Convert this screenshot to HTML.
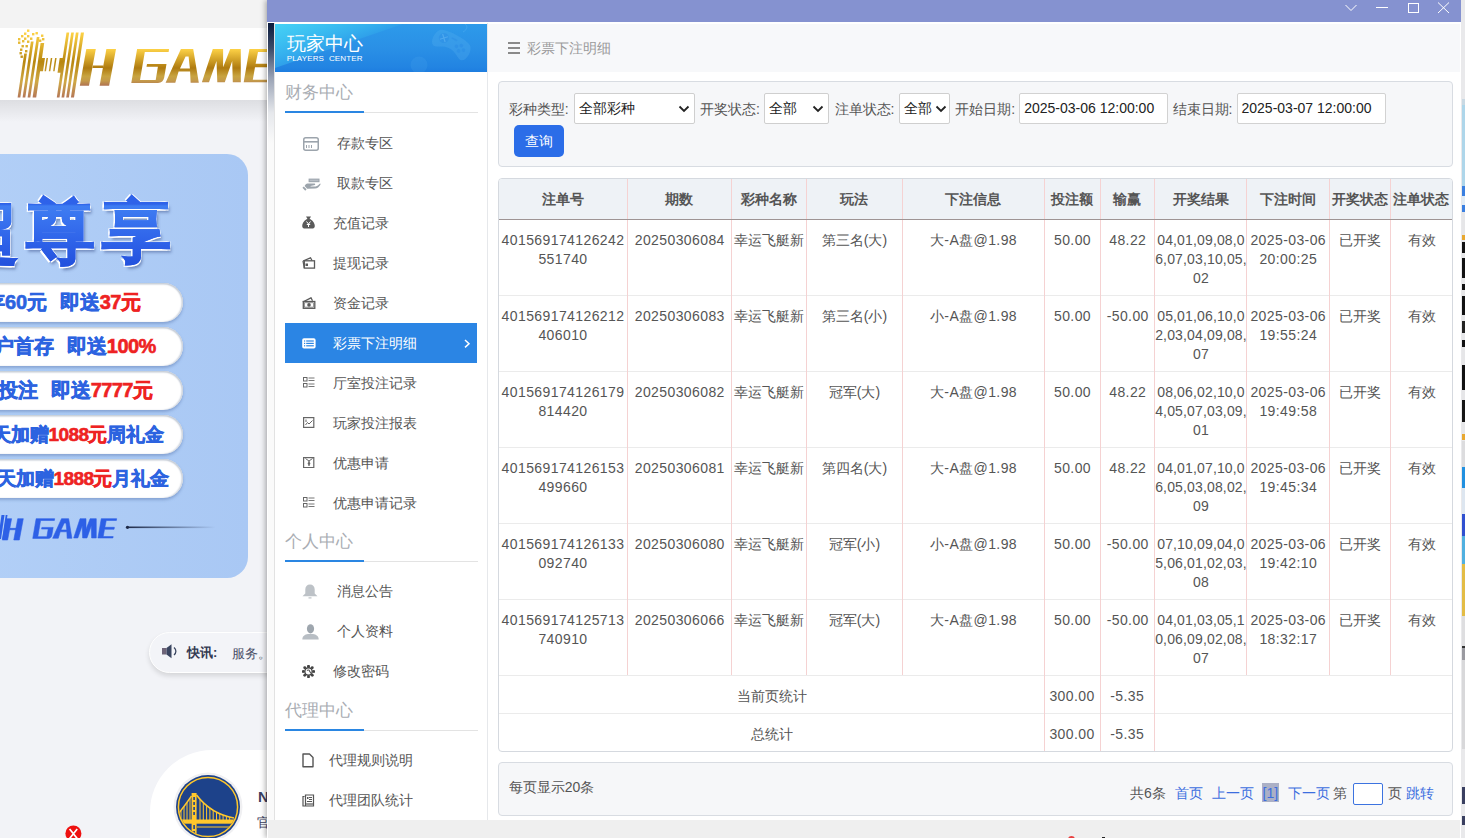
<!DOCTYPE html>
<html><head><meta charset="utf-8">
<style>
*{box-sizing:border-box}
html,body{margin:0;padding:0}
body{width:1465px;height:838px;overflow:hidden;position:relative;background:#F2F3F7;font-family:"Liberation Sans",sans-serif;color:#555}
.abs{position:absolute}
/* background page */
#topstrip{position:absolute;left:0;top:0;width:1465px;height:28px;background:#F3F3F3}
#hdrband{position:absolute;left:0;top:28px;width:1465px;height:72px;background:#fff}
#hdrshadow{position:absolute;left:0;top:100px;width:1465px;height:22px;background:linear-gradient(#DDDEE2,#F2F3F7)}
#banner{position:absolute;left:-60px;top:154px;width:308px;height:424px;border-radius:21px;background:linear-gradient(90deg,#B3D0F7,#A9C8F4);overflow:hidden}
.pill{position:absolute;left:0;width:243.4px;height:39px;border-radius:20px;background:#fff;box-shadow:inset 0 1.5px 1.5px #C5CCD6,inset -1.5px 0 1.5px #CFD5DE,0 2px 3px rgba(60,90,150,.35);font-weight:bold;font-size:20px;line-height:39px;color:#2C63E0;white-space:nowrap;overflow:hidden;-webkit-text-stroke:.6px currentColor;word-spacing:7px}
.pill b{color:#EE2222;-webkit-text-stroke:.6px #EE2222;letter-spacing:-.6px}
#notice{position:absolute;left:149px;top:631.5px;width:300px;height:41px;border-radius:21px;background:#F3F4F8;border:1.5px solid #fff;box-shadow:0 3px 5px rgba(0,0,0,.12)}
#card{position:absolute;left:149.5px;top:750px;width:400px;height:200px;border-radius:62px;background:#fff}
/* popup */
#popup{position:absolute;left:267px;top:0;width:1194px;height:838px;background:#fff;box-shadow:-2px 0 5px rgba(0,0,0,.28),2px 0 3px rgba(0,0,0,.2)}
#titlebar{position:absolute;left:0;top:0;width:1194px;height:22px;background:#8592D0}
#strip{position:absolute;left:1px;top:23px;width:7px;height:797px;background:linear-gradient(#0B1B3C 0px,#3B4A68 25px,#9AA3B5 55px,#E6E8EC 90px,#FAFAFA 120px,#FAFAFA);border-right:1px solid #E2E2E2}
#sidebar{position:absolute;left:8px;top:23px;width:213px;height:797px;background:#fff;border-right:1px solid #E6E8EB}
#sbhead{position:absolute;left:0;top:1px;width:212px;height:47.5px;background:linear-gradient(180deg,#2D9AEA,#2A90E6 50%,#2284E2 90%,#1E7DE0);overflow:hidden}
#main{position:absolute;left:221px;top:23px;width:972px;height:797px;background:#fff}
#topbar{position:absolute;left:0;top:1px;width:972px;height:48px;background:#F7F8FA}
#bottomgray{position:absolute;left:1px;top:820px;width:1192px;height:18px;background:#EFEFEF}
.sec{position:absolute;left:9.7px;font-size:17px;color:#A9ADB3;line-height:20px}
.secline{position:absolute;left:9.7px;width:193px;height:1px;background:#E3E3E3}
.secline i{position:absolute;left:0;top:-1px;width:79px;height:2.5px;background:#2A86E2}
.mi{position:absolute;left:0;width:212px;height:40px;font-size:14px;line-height:40px;color:#555;white-space:nowrap}
.mi .ic{position:absolute;top:0;}
.mi.act{left:10px;width:192px;background:#2B85E4;color:#fff}
.box{position:absolute;background:#F6F7F9;border:1px solid #D8DCE2;border-radius:4px}
.lbl{position:absolute;font-size:14px;color:#555;line-height:16px;white-space:nowrap}
.sel{position:absolute;height:31px;border:1px solid #CFCFCF;border-radius:2px;background:#fff;font-size:14px;color:#222;line-height:29px;padding-left:4px}
.sel svg{position:absolute;right:4px;top:11px}
.inp{position:absolute;height:31px;border:1px solid #D2D2D2;border-radius:2px;background:#fff;font-size:14px;color:#222;line-height:29px;padding-left:4px;font-family:"Liberation Sans",sans-serif}
.btn{position:absolute;background:#2B6DE8;border-radius:5px;color:#fff;font-size:14px;text-align:center;line-height:32px}
/* table */
.tbl{position:absolute;left:10px;top:155px;width:955px;height:574px;border:1px solid #D5D9DF;border-radius:4px;background:#fff;overflow:hidden}
.tbl>div{position:absolute}
.thbg{left:0;top:0;width:953px;height:40px;background:#EEF2F6}
.th{top:0;height:40px;line-height:40px;text-align:center;font-weight:bold;font-size:14px;color:#555;white-space:nowrap}
.thl{left:0;top:40px;width:953px;height:1px;background:#9E9494}
.td{text-align:center;font-size:14px;line-height:19px;padding-top:10.8px;color:#555;white-space:nowrap}
.td.n{letter-spacing:.4px}
.td.rs{letter-spacing:.15px}
.hl{left:0;width:953px;height:1px;background:#EBEBEB}
.vl{width:1px;background:#F5D2D2}
.pg{position:absolute;font-size:14px;line-height:16px;white-space:nowrap}
.lnk{color:#3C6EDF}
</style></head><body>
<div id="topstrip"></div>
<div id="hdrband"></div>
<div id="hdrshadow"></div>
<svg class="abs" style="left:0;top:0" width="270" height="100">
<defs>
<linearGradient id="gb" gradientUnits="userSpaceOnUse" x1="0" y1="32" x2="0" y2="98"><stop offset="0" stop-color="#FFD447"/><stop offset="0.45" stop-color="#B8870F"/><stop offset="0.75" stop-color="#CFA845"/><stop offset="1" stop-color="#B47658"/></linearGradient>
<linearGradient id="gs" gradientUnits="userSpaceOnUse" x1="0" y1="48.5" x2="0" y2="86"><stop offset="0" stop-color="#FFD447"/><stop offset="0.52" stop-color="#AF7B10"/><stop offset="0.74" stop-color="#C8A440"/><stop offset="0.86" stop-color="#C49A4A"/><stop offset="1" stop-color="#AE7052"/></linearGradient>
</defs>
<g fill="url(#gb)">
<polygon points="17.6,97.6 20.3,97.6 26.9,53.5 24.2,53.5"/>
<polygon points="22.6,97.6 25.3,97.6 33.6,41.5 30.9,41.5"/>
<polygon points="27.6,97.6 30.3,97.6 39.5,37 36.8,37"/>
<polygon points="32.6,97.6 36.2,97.6 44.2,43 40.6,43"/>
<polygon points="56.8,97.6 59.5,97.6 69.2,32.6 66.5,32.6"/>
<polygon points="61.5,97.6 64.2,97.6 73.9,32.6 71.2,32.6"/>
<polygon points="66.2,97.6 68.9,97.6 78.6,32.6 75.9,32.6"/>
<polygon points="70.9,97.6 74,97.6 84,32.6 80.9,32.6"/>
<polygon points="38.6,71.3 43,71.3 45,58 40.6,58"/>
<polygon points="44.5,71.3 46,71.3 48,58 46.5,58"/>
<polygon points="48.8,71.3 50.3,71.3 52.3,58 50.8,58"/>
<polygon points="53.1,71.3 54.6,71.3 56.6,58 55.1,58"/>
<polygon points="57.5,72.7 62.2,72.7 64.4,58 59.7,58"/>
<rect x="27" y="29.5" width="2.4" height="2.4"/><rect x="24" y="32.5" width="2.4" height="2.4"/><rect x="21" y="35" width="2.4" height="2.4"/><rect x="27" y="35" width="2.4" height="2.4"/><rect x="32" y="33" width="2.4" height="2.4"/><rect x="35.5" y="32" width="2.4" height="2.4"/><rect x="18" y="38" width="2.4" height="2.4"/><rect x="24" y="37.5" width="2.4" height="2.4"/><rect x="30" y="37.5" width="2.4" height="2.4"/><rect x="41" y="34.5" width="2.4" height="2.4"/><rect x="42" y="38" width="2.4" height="2.4"/><rect x="18" y="41.5" width="2.4" height="2.4"/><rect x="22" y="40" width="2.4" height="2.4"/><rect x="27" y="40.5" width="2.4" height="2.4"/><rect x="21.5" y="45" width="2.4" height="2.4"/><rect x="25.5" y="45" width="2.4" height="2.4"/><rect x="20" y="48.5" width="2.4" height="2.4"/><rect x="19.5" y="52" width="2.4" height="2.4"/><rect x="25" y="50" width="2.4" height="2.4"/><rect x="20.5" y="55.5" width="2.4" height="2.4"/><rect x="39" y="39.5" width="2.4" height="2.4"/>
</g>
<g fill="url(#gs)">
<polygon points="86.3,48.9 95.8,48.9 89,85.7 79.8,85.7"/>
<polygon points="106.4,48.9 116,48.9 109.1,85.7 99.6,85.7"/>
<polygon points="92.8,65.6 103.4,65.6 103,68 92.4,68"/>
<path d="M137.1,48.9 L169.1,48.9 L168.6,52 L144.8,52 L140,79.9 L155.7,79.9 L157.9,66.8 L146.5,66.8 L147,64 L166.5,64 L164.2,77.5 C163.5,81 161.5,82.9 158,82.9 L131.3,82.9 Z"/>
<path fill-rule="evenodd" d="M165.6,82.7 L180.9,48.9 L193.2,48.9 L198.8,82.7 L190.6,82.7 L190.1,71.5 L178.6,71.5 L175.3,82.7 Z M180,68.4 L189.9,68.4 L188.6,56.5 L185.6,56.5 Z"/>
<path d="M201.9,82.2 L212.8,48.9 L223.1,48.9 L223.1,67.2 L230.2,48.9 L240.8,48.9 L240.8,82.2 L232.8,82.2 L232.2,61 L224.8,82.2 L217.3,82.2 L216.5,61 L209,82.2 Z"/>
<path d="M243.7,82.2 L249.4,48.9 L276,48.9 L275.5,52 L258,52 L255.6,63.8 L272,63.8 L271.5,67.2 L255,67.2 L252.8,79.8 L270,79.8 L269.5,82.2 Z"/>
</g>
</svg>
<div id="banner">

<div class="abs" style="left:1.5px;top:37.5px;width:380px;white-space:nowrap;font-size:69px;line-height:80px;font-weight:bold;color:#2E62E9;letter-spacing:7px;-webkit-text-stroke:1.2px #2E62E9;text-shadow:-1.5px -1.5px 0 #fff,1.5px -1.5px 0 #fff,-1.5px 1.5px 0 #fff,1.5px 1.5px 0 #fff,2px 4px 3px rgba(40,60,120,.45)"><span style="position:absolute;left:8px">超尊享</span><span style="position:absolute;left:8px;top:0;text-shadow:none;-webkit-text-stroke:1.2px transparent;color:transparent;background:linear-gradient(180deg,rgba(0,0,0,0) 0,rgba(0,0,0,0) 12px,#3F7DF2 14px,#2E62E9 50px,#2452DE 72px,#2452DE 80px);-webkit-background-clip:text;background-clip:text">超尊享</span></div>
<div class="pill" style="top:128.8px"><span class="abs" style="left:25px">首存60元 即送<b>37元</b></span></div>
<div class="pill" style="top:172.9px"><span class="abs" style="left:34.3px">新户首存 即送<b>100%</b></span></div>
<div class="pill" style="top:217px"><span class="abs" style="left:18.2px">每日投注 即送<b>7777元</b></span></div>
<div class="pill" style="top:261px;font-size:19px"><span class="abs" style="left:32.5px">每天加赠<b>1088元</b>周礼金</span></div>
<div class="pill" style="top:305px;font-size:19px"><span class="abs" style="left:37.5px">每天加赠<b>1888元</b>月礼金</span></div>
<svg class="abs" style="left:0;top:0" width="308" height="424">
<defs><linearGradient id="ln" x1="0" x2="1" y1="0" y2="0"><stop offset="0" stop-color="#1E2A48"/><stop offset="1" stop-color="#1E2A48" stop-opacity="0"/></linearGradient></defs>
<g transform="translate(60,-154)">
<g transform="translate(-43.4,490.3) scale(0.58,0.58)" fill="#2D60E6" stroke="#2D60E6" stroke-width="1">
<g transform="translate(-1,0)"><polygon points="86.3,48.9 95.8,48.9 89,85.7 79.8,85.7"/>
<polygon points="106.4,48.9 116,48.9 109.1,85.7 99.6,85.7"/>
<polygon points="92.8,65.6 103.4,65.6 103,68 92.4,68"/></g>
<path d="M137.1,48.9 L169.1,48.9 L168.6,52 L144.8,52 L140,79.9 L155.7,79.9 L157.9,66.8 L146.5,66.8 L147,64 L166.5,64 L164.2,77.5 C163.5,81 161.5,82.9 158,82.9 L131.3,82.9 Z"/>
<path fill-rule="evenodd" d="M165.6,82.7 L180.9,48.9 L193.2,48.9 L198.8,82.7 L190.6,82.7 L190.1,71.5 L178.6,71.5 L175.3,82.7 Z M180,68.4 L189.9,68.4 L188.6,56.5 L185.6,56.5 Z"/>
<path d="M201.9,82.2 L212.8,48.9 L223.1,48.9 L223.1,67.2 L230.2,48.9 L240.8,48.9 L240.8,82.2 L232.8,82.2 L232.2,61 L224.8,82.2 L217.3,82.2 L216.5,61 L209,82.2 Z"/>
<path d="M243.7,82.2 L249.4,48.9 L276,48.9 L275.5,52 L258,52 L255.6,63.8 L272,63.8 L271.5,67.2 L255,67.2 L252.8,79.8 L270,79.8 L269.5,82.2 Z"/>
</g>
<polygon points="-2,539 1,539 4.5,515 1.5,515" fill="#2D60E6"/><polygon points="2.2,539 4,539 7.5,515 5.7,515" fill="#2D60E6"/><rect x="126.6" y="526.5" width="89" height="1.6" fill="url(#ln)"/>
<circle cx="127.5" cy="527.3" r="1.6" fill="#1E2A48"/>
</g>
</svg>

</div>
<div id="notice"><svg class="abs" style="left:11.5px;top:11.5px" width="17" height="15"><rect x="0" y="4" width="4.5" height="6.5" fill="#6E6478"/><path d="M4.5 4 L9.5 0.3 L9.5 14.2 L4.5 10.5 Z" fill="#3A4560"/><path d="M12 3.5 C14.5 5.5 14.5 9 12 11" stroke="#3A4560" stroke-width="1.3" fill="none"/></svg><span class="abs" style="left:37px;top:12.5px;font-size:13px;line-height:16px;font-weight:bold;color:#333A52">快讯:</span><span class="abs" style="left:82px;top:13px;font-size:13px;line-height:16px;color:#4A5068">服务。</span></div>
<div id="card"><svg class="abs" style="left:23px;top:22px" width="70" height="70"><defs><clipPath id="cc"><circle cx="35" cy="35" r="29"/></clipPath></defs><circle cx="35" cy="35" r="34.5" fill="#F0F0F2"/><circle cx="35" cy="35" r="32" fill="#1D428A"/><circle cx="35" cy="35" r="29.6" fill="none" stroke="#FFC72C" stroke-width="1.5"/><g clip-path="url(#cc)"><g fill="#FFC72C"><rect x="18.6" y="21" width="5" height="50"/><rect x="4" y="47.5" width="62" height="4.2"/></g><g fill="#1D428A"><rect x="20.3" y="25" width="1.6" height="3"/><rect x="20.3" y="30" width="1.6" height="3"/><rect x="20.3" y="35" width="1.6" height="3"/><rect x="20.3" y="40" width="1.6" height="3"/><rect x="20.3" y="53" width="1.6" height="4"/><rect x="20.3" y="59" width="1.6" height="4"/></g><g stroke="#FFC72C" fill="none"><path d="M23.5 23 Q38 42 61 46" stroke-width="1.6"/><path d="M18.5 24 Q13 32 6 41" stroke-width="1.4"/><path d="M27.0 27.3 L27.0 48 M30.3 30.7 L30.3 48 M33.6 33.6 L33.6 48 M36.9 36.1 L36.9 48 M40.2 38.3 L40.2 48 M43.5 40.2 L43.5 48 M46.8 41.8 L46.8 48 M50.1 43.1 L50.1 48 M53.4 44.2 L53.4 48 M56.7 45.1 L56.7 48 M8.0 38.4 L8.0 48 M11.0 34.5 L11.0 48 M14.0 30.4 L14.0 48 M17.0 26.1 L17.0 48 " stroke-width="1"/><path d="M24 55 L62 55" stroke-width="1.2"/></g></g></svg><span class="abs" style="left:108.5px;top:38px;font-size:15px;line-height:17px;font-weight:bold;color:#3C4060">N</span><span class="abs" style="left:107.5px;top:64.5px;font-size:13px;line-height:15px;color:#3C4060">官</span></div>
<svg class="abs" style="left:65px;top:824.5px" width="17" height="17"><circle cx="8.4" cy="8.4" r="8" fill="#EE1111"/><path d="M4.6 4 L12.2 13.5 M12.2 4 L4.6 13.5" stroke="#fff" stroke-width="1.7"/></svg>

<div id="popup">
 <div id="titlebar">
  <svg class="abs" style="left:0;top:0" width="1194" height="22">
   <polyline points="1078.5,5 1084,10.5 1089.5,5" fill="none" stroke="#fff" stroke-width="1"/>
   <line x1="1109" y1="7.5" x2="1121" y2="7.5" stroke="#fff" stroke-width="1"/>
   <rect x="1141.5" y="3.5" width="10" height="9" fill="none" stroke="#fff" stroke-width="1"/>
   <line x1="1171" y1="2.5" x2="1182" y2="13" stroke="#fff" stroke-width="1"/>
   <line x1="1182" y1="2.5" x2="1171" y2="13" stroke="#fff" stroke-width="1"/>
  </svg>
 </div>
 <div id="strip"></div>
 <div id="sidebar">
  <div id="sbhead">
   
   <div class="abs" style="left:0;top:0;width:128px;height:44px;background:linear-gradient(to bottom right,#46D2F6 0%,#3DC2F2 20%,#35B0EE 38%,#2FA0EA 50%);clip-path:polygon(0 0,100% 0,0 100%)"></div>
   <svg class="abs" style="left:0;top:0" width="212" height="48"><g transform="translate(177,20) rotate(28)"><path d="M-17 -7 C-12 -11 12 -11 17 -7 C21 -3 21 8 16 10 C12 11 8 5 0 5 C-8 5 -12 11 -16 10 C-21 8 -21 -3 -17 -7 Z" fill="#5BB4F2" opacity=".28"/><circle cx="-10" cy="-1.5" r="5" fill="#2C8EE6" opacity=".55"/><path d="M-13 -4.5 L-7 1.5 M-7 -4.5 L-13 1.5" stroke="#6ABCF4" stroke-width="1.2" opacity=".5"/><circle cx="9" cy="-3" r="1.8" fill="#2C8EE6" opacity=".6"/><circle cx="13" cy="0" r="1.8" fill="#2C8EE6" opacity=".6"/><circle cx="9" cy="3" r="1.8" fill="#2C8EE6" opacity=".6"/><circle cx="5" cy="0" r="1.8" fill="#2C8EE6" opacity=".6"/><rect x="-3" y="-6" width="6" height="1.5" fill="#2C8EE6" opacity=".5"/></g><path d="M188 8 C193 5 193 2 189 -1" stroke="#5BB4F2" stroke-width="1" fill="none" opacity=".4"/><circle cx="144" cy="41" r="8.5" fill="#5BB4F2" opacity=".15"/></svg>
   <div class="abs" style="left:11.7px;top:8.8px;font-size:19px;line-height:22px;color:#fff;white-space:nowrap">玩家中心</div>
   <div class="abs" style="left:11.7px;top:29.8px;font-size:8px;line-height:9px;color:#fff;white-space:nowrap;word-spacing:2.5px;letter-spacing:.15px">PLAYERS CENTER</div>

  </div>
  
  <div class="sec" style="top:59.5px">财务中心</div>
  <div class="secline" style="top:88.5px"><i></i></div>
  <div class="mi" style="top:100px"><svg class="abs" style="left:28px;top:14px" width="16" height="14"><rect x="0.75" y="0.75" width="14.5" height="12.5" rx="2" fill="none" stroke="#9CA4AC" stroke-width="1.5"/><rect x="1" y="4" width="14" height="1.6" fill="#9CA4AC"/><rect x="3" y="8" width="1" height="3" fill="#9CA4AC"/><rect x="5.5" y="8" width="1" height="3" fill="#9CA4AC"/><rect x="8" y="8" width="1" height="3" fill="#9CA4AC"/></svg><span class="abs" style="left:61.5px">存款专区</span></div>
  <div class="mi" style="top:140px"><svg class="abs" style="left:26.5px;top:14.5px" width="19" height="14"><rect x="6.6" y="0.6" width="10.9" height="3.6" fill="#9CA4AC"/><rect x="7.6" y="1.6" width="8.9" height="1.6" fill="#B8BEC5"/><path d="M2.6 8 C3.5 6.5 4.2 5.6 5.5 5.6 L12.4 5.6 C13.6 5.6 13.6 7.3 12.1 7.3 L8.5 7.9 C8.5 8.4 8.7 8.6 9.2 8.6 L13.6 8.6 C15.5 8.2 17 6.5 18.1 5.6 C18.8 5.6 18.6 6.5 18.2 7 C17 8.8 15.5 10.4 13 10.5 L5.2 10.7 Z" fill="#9CA4AC"/><path d="M1.1 9.1 L3.9 12" stroke="#9CA4AC" stroke-width="1.8"/></svg><span class="abs" style="left:61.5px">取款专区</span></div>
  <div class="mi" style="top:180px"><svg class="abs" style="left:27px;top:13px" width="13" height="13"><path d="M4 0.5 L9 0.5 L7.5 3 L8.5 3.2 C11.5 5 12.8 7.5 12.8 10 C12.8 12 11.5 12.6 10 12.6 L3 12.6 C1.5 12.6 0.2 12 0.2 10 C0.2 7.5 1.5 5 4.5 3.2 L5.5 3 Z" fill="#5A5A5A"/><path d="M4.5 5.5 L6.5 8 L8.5 5.5 M6.5 8 L6.5 11 M4.8 8.5 L8.2 8.5" stroke="#fff" stroke-width="1" fill="none"/></svg><span class="abs" style="left:57.7px">充值记录</span></div>
  <div class="mi" style="top:220px"><svg class="abs" style="left:27px;top:14px" width="14" height="12"><path d="M1 4 L8.5 0.8 L10 3.5" fill="none" stroke="#5A5A5A" stroke-width="1.3"/><rect x="2.3" y="3.8" width="10.2" height="7.3" fill="none" stroke="#5A5A5A" stroke-width="1.3"/><rect x="3.5" y="6.5" width="2.5" height="2.5" fill="#5A5A5A"/><path d="M1 4 L2.3 11" stroke="#5A5A5A" stroke-width="1.3"/></svg><span class="abs" style="left:57.7px">提现记录</span></div>
  <div class="mi" style="top:260px"><svg class="abs" style="left:27px;top:14px" width="14" height="12"><path d="M0.8 5 L9 0.8 L10.5 3.8" fill="none" stroke="#5A5A5A" stroke-width="1.3"/><rect x="1.3" y="4.5" width="11.5" height="6.8" fill="none" stroke="#5A5A5A" stroke-width="1.3"/><circle cx="7" cy="7.9" r="1.8" fill="#5A5A5A"/><rect x="2.6" y="5.8" width="9" height="4.3" fill="none" stroke="#5A5A5A" stroke-width=".6"/></svg><span class="abs" style="left:57.7px">资金记录</span></div>
  <div class="mi act" style="top:300px"><svg class="abs" style="left:16.8px;top:15px" width="14" height="11"><rect x="0.2" y="0.2" width="13.4" height="10.4" rx="1.8" fill="#fff"/><rect x="2" y="2.4" width="1.2" height="1.2" fill="#2B85E4"/><rect x="2" y="4.8" width="1.2" height="1.2" fill="#2B85E4"/><rect x="2" y="7.2" width="1.2" height="1.2" fill="#2B85E4"/><rect x="4.2" y="2.4" width="7.6" height="1.2" fill="#2B85E4"/><rect x="4.2" y="4.8" width="7.6" height="1.2" fill="#2B85E4"/><rect x="4.2" y="7.2" width="7.6" height="1.2" fill="#2B85E4"/></svg><span class="abs" style="left:47.7px">彩票下注明细</span><svg class="abs" style="left:178.5px;top:15.5px" width="7" height="10"><polyline points="1,1 5,4.7 1,8.4" fill="none" stroke="#fff" stroke-width="1.5"/></svg></div>
  <div class="mi" style="top:340px"><svg class="abs" style="left:27.5px;top:14px" width="12" height="11"><rect x="0.5" y="0.5" width="3.5" height="3.5" fill="none" stroke="#666" stroke-width="1"/><rect x="0.5" y="6.5" width="3.5" height="3.5" fill="none" stroke="#666" stroke-width="1"/><rect x="5.5" y="0.5" width="6" height="1" fill="#777"/><rect x="5.5" y="3" width="6" height="1" fill="#777"/><rect x="5.5" y="6.5" width="6" height="1" fill="#777"/><rect x="5.5" y="9" width="6" height="1" fill="#777"/></svg><span class="abs" style="left:57.7px">厅室投注记录</span></div>
  <div class="mi" style="top:380px"><svg class="abs" style="left:27.5px;top:14px" width="12" height="11"><rect x="0.6" y="0.6" width="10.2" height="9.8" fill="none" stroke="#666" stroke-width="1.2"/><polyline points="2.5,8 4.5,5.5 6,7 9.5,3.5" fill="none" stroke="#666" stroke-width="1"/><path d="M3 2.5 L3 5" stroke="#666" stroke-width="1"/></svg><span class="abs" style="left:57.7px">玩家投注报表</span></div>
  <div class="mi" style="top:420px"><svg class="abs" style="left:27.5px;top:13.5px" width="12" height="11"><rect x="0.6" y="0.6" width="10.2" height="10" fill="none" stroke="#666" stroke-width="1.2"/><path d="M2.5 1.5 L6 4 L9.5 1.5" fill="none" stroke="#666" stroke-width="1"/><path d="M6 4 L6 9" stroke="#666" stroke-width="1.3"/><circle cx="6" cy="6.5" r="1.3" fill="#666"/></svg><span class="abs" style="left:57.7px">优惠申请</span></div>
  <div class="mi" style="top:460px"><svg class="abs" style="left:27.5px;top:14px" width="12" height="11"><rect x="0.5" y="0.5" width="3.5" height="3.5" fill="none" stroke="#666" stroke-width="1"/><rect x="0.5" y="6.5" width="3.5" height="3.5" fill="none" stroke="#666" stroke-width="1"/><rect x="5.5" y="0.5" width="6" height="1" fill="#777"/><rect x="5.5" y="3" width="6" height="1" fill="#777"/><rect x="5.5" y="6.5" width="6" height="1" fill="#777"/><rect x="5.5" y="9" width="6" height="1" fill="#777"/></svg><span class="abs" style="left:57.7px">优惠申请记录</span></div>
  <div class="sec" style="top:509px">个人中心</div>
  <div class="secline" style="top:537.6px"><i></i></div>
  <div class="mi" style="top:548px"><svg class="abs" style="left:26.5px;top:13px" width="16" height="15"><path d="M8 0.5 C5 0.5 3.3 2.5 3.3 5.5 L3.3 9.5 L0.5 12.3 L15.5 12.3 L12.7 9.5 L12.7 5.5 C12.7 2.5 11 0.5 8 0.5 Z" fill="#BDC2C7"/><rect x="6.5" y="13.3" width="3" height="1.2" fill="#BDC2C7"/></svg><span class="abs" style="left:61.5px">消息公告</span></div>
  <div class="mi" style="top:588px"><svg class="abs" style="left:26.5px;top:12.5px" width="17" height="16"><ellipse cx="8.5" cy="4.8" rx="3.6" ry="4.6" fill="#9EA6AE"/><path d="M0.3 15.5 C0.3 12 3 10.5 6 10 L11 10 C14 10.5 16.7 12 16.7 15.5 Z" fill="#B8BEC4"/></svg><span class="abs" style="left:61.5px">个人资料</span></div>
  <div class="mi" style="top:628px"><svg class="abs" style="left:27px;top:14px" width="13" height="13"><g fill="#444"><circle cx="11.80" cy="6.50" r="1.45"/><circle cx="10.25" cy="10.25" r="1.45"/><circle cx="6.50" cy="11.80" r="1.45"/><circle cx="2.75" cy="10.25" r="1.45"/><circle cx="1.20" cy="6.50" r="1.45"/><circle cx="2.75" cy="2.75" r="1.45"/><circle cx="6.50" cy="1.20" r="1.45"/><circle cx="10.25" cy="2.75" r="1.45"/></g><circle cx="6.5" cy="6.5" r="3.7" fill="none" stroke="#444" stroke-width="1.4"/><path d="M5 5.5 C6 4.5 7.5 5 7.6 6.2 L9.6 9" stroke="#555" stroke-width="1.1" fill="none"/></svg><span class="abs" style="left:57.7px">修改密码</span></div>
  <div class="sec" style="top:678.3px">代理中心</div>
  <div class="secline" style="top:706.5px"><i></i></div>
  <div class="mi" style="top:717px"><svg class="abs" style="left:27px;top:13px" width="12" height="15"><path d="M1 1 L7.5 1 L11 4.5 L11 13.7 L1 13.7 Z" fill="none" stroke="#555" stroke-width="1.4" stroke-linejoin="round"/></svg><span class="abs" style="left:54px">代理规则说明</span></div>
  <div class="mi" style="top:757px"><svg class="abs" style="left:27px;top:14px" width="13" height="13"><path d="M2.5 2.5 L1 2.5 L1 12 L11.5 12 L11.5 1 L3.5 1 L3.5 12" fill="none" stroke="#555" stroke-width="1.2"/><rect x="5" y="3" width="1.5" height="2" fill="#555"/><rect x="7" y="3" width="3" height="1" fill="#555"/><rect x="7" y="5" width="3" height="1" fill="#555"/><rect x="5" y="7" width="5" height="1" fill="#555"/><rect x="4" y="9" width="7" height="2.5" fill="#999"/></svg><span class="abs" style="left:54px">代理团队统计</span></div>

 </div>
 <div id="main">
  <div id="topbar">
   <svg class="abs" style="left:20px;top:18px" width="12" height="12"><rect x="0" y="0" width="12" height="2" fill="#8A8A8A"/><rect x="0" y="5" width="12" height="2" fill="#8A8A8A"/><rect x="0" y="10" width="12" height="2" fill="#8A8A8A"/></svg>
   <div class="abs" style="left:39px;top:16px;font-size:14px;line-height:16px;color:#9A9A9A">彩票下注明细</div>
  </div>
  
  <div class="box" style="left:10px;top:58px;width:955px;height:86px"></div>
  <div class="lbl" style="left:20.7px;top:77.5px">彩种类型:</div>
  <div class="sel" style="left:86.3px;top:70px;width:121px">全部彩种<svg width="12" height="8"><polyline points="1.5,1.5 6,6 10.5,1.5" fill="none" stroke="#222" stroke-width="1.8"/></svg></div>
  <div class="lbl" style="left:212px;top:77.5px">开奖状态:</div>
  <div class="sel" style="left:276.2px;top:70px;width:65px">全部<svg width="12" height="8"><polyline points="1.5,1.5 6,6 10.5,1.5" fill="none" stroke="#222" stroke-width="1.8"/></svg></div>
  <div class="lbl" style="left:346.5px;top:77.5px">注单状态:</div>
  <div class="sel" style="left:411px;top:70px;width:51px">全部<svg width="12" height="8" style="right:2px"><polyline points="1.5,1.5 6,6 10.5,1.5" fill="none" stroke="#222" stroke-width="1.8"/></svg></div>
  <div class="lbl" style="left:467.3px;top:77.5px">开始日期:</div>
  <div class="inp" style="left:531.2px;top:70px;width:149px">2025-03-06 12:00:00</div>
  <div class="lbl" style="left:684.5px;top:77.5px">结束日期:</div>
  <div class="inp" style="left:748.5px;top:70px;width:149px">2025-03-07 12:00:00</div>
  <div class="btn" style="left:26px;top:102px;width:50px;height:32px">查询</div>

  <div class="tbl">
<div class="thbg"></div>
<div class="th" style="left:-1.0px;width:129.0px">注单号</div>
<div class="th" style="left:128.0px;width:104.5px">期数</div>
<div class="th" style="left:232.5px;width:74.5px">彩种名称</div>
<div class="th" style="left:307.0px;width:96.0px">玩法</div>
<div class="th" style="left:403.0px;width:142.0px">下注信息</div>
<div class="th" style="left:545.0px;width:56.0px">投注额</div>
<div class="th" style="left:601.0px;width:54.5px">输赢</div>
<div class="th" style="left:655.5px;width:92.0px">开奖结果</div>
<div class="th" style="left:747.5px;width:82.5px">下注时间</div>
<div class="th" style="left:830.0px;width:61.0px">开奖状态</div>
<div class="th" style="left:891.0px;width:62.0px">注单状态</div>
<div class="td n" style="left:-0.5px;width:129.0px;top:41px">401569174126242<br>551740</div>
<div class="td n" style="left:128.5px;width:104.5px;top:41px">20250306084</div>
<div class="td" style="left:233.0px;width:74.5px;top:41px">幸运飞艇新</div>
<div class="td" style="left:307.5px;width:96.0px;top:41px">第三名(大)</div>
<div class="td n" style="left:403.5px;width:142.0px;top:41px">大-A盘@1.98</div>
<div class="td n" style="left:545.5px;width:56.0px;top:41px">50.00</div>
<div class="td n" style="left:601.5px;width:54.5px;top:41px">48.22</div>
<div class="td n rs" style="left:656.0px;width:92.0px;top:41px">04,01,09,08,0<br>6,07,03,10,05,<br>02</div>
<div class="td n" style="left:748.0px;width:82.5px;top:41px">2025-03-06<br>20:00:25</div>
<div class="td" style="left:830.5px;width:61.0px;top:41px">已开奖</div>
<div class="td" style="left:891.5px;width:62.0px;top:41px">有效</div>
<div class="td n" style="left:-0.5px;width:129.0px;top:117px">401569174126212<br>406010</div>
<div class="td n" style="left:128.5px;width:104.5px;top:117px">20250306083</div>
<div class="td" style="left:233.0px;width:74.5px;top:117px">幸运飞艇新</div>
<div class="td" style="left:307.5px;width:96.0px;top:117px">第三名(小)</div>
<div class="td n" style="left:403.5px;width:142.0px;top:117px">小-A盘@1.98</div>
<div class="td n" style="left:545.5px;width:56.0px;top:117px">50.00</div>
<div class="td n" style="left:601.5px;width:54.5px;top:117px">-50.00</div>
<div class="td n rs" style="left:656.0px;width:92.0px;top:117px">05,01,06,10,0<br>2,03,04,09,08,<br>07</div>
<div class="td n" style="left:748.0px;width:82.5px;top:117px">2025-03-06<br>19:55:24</div>
<div class="td" style="left:830.5px;width:61.0px;top:117px">已开奖</div>
<div class="td" style="left:891.5px;width:62.0px;top:117px">有效</div>
<div class="td n" style="left:-0.5px;width:129.0px;top:193px">401569174126179<br>814420</div>
<div class="td n" style="left:128.5px;width:104.5px;top:193px">20250306082</div>
<div class="td" style="left:233.0px;width:74.5px;top:193px">幸运飞艇新</div>
<div class="td" style="left:307.5px;width:96.0px;top:193px">冠军(大)</div>
<div class="td n" style="left:403.5px;width:142.0px;top:193px">大-A盘@1.98</div>
<div class="td n" style="left:545.5px;width:56.0px;top:193px">50.00</div>
<div class="td n" style="left:601.5px;width:54.5px;top:193px">48.22</div>
<div class="td n rs" style="left:656.0px;width:92.0px;top:193px">08,06,02,10,0<br>4,05,07,03,09,<br>01</div>
<div class="td n" style="left:748.0px;width:82.5px;top:193px">2025-03-06<br>19:49:58</div>
<div class="td" style="left:830.5px;width:61.0px;top:193px">已开奖</div>
<div class="td" style="left:891.5px;width:62.0px;top:193px">有效</div>
<div class="td n" style="left:-0.5px;width:129.0px;top:269px">401569174126153<br>499660</div>
<div class="td n" style="left:128.5px;width:104.5px;top:269px">20250306081</div>
<div class="td" style="left:233.0px;width:74.5px;top:269px">幸运飞艇新</div>
<div class="td" style="left:307.5px;width:96.0px;top:269px">第四名(大)</div>
<div class="td n" style="left:403.5px;width:142.0px;top:269px">大-A盘@1.98</div>
<div class="td n" style="left:545.5px;width:56.0px;top:269px">50.00</div>
<div class="td n" style="left:601.5px;width:54.5px;top:269px">48.22</div>
<div class="td n rs" style="left:656.0px;width:92.0px;top:269px">04,01,07,10,0<br>6,05,03,08,02,<br>09</div>
<div class="td n" style="left:748.0px;width:82.5px;top:269px">2025-03-06<br>19:45:34</div>
<div class="td" style="left:830.5px;width:61.0px;top:269px">已开奖</div>
<div class="td" style="left:891.5px;width:62.0px;top:269px">有效</div>
<div class="td n" style="left:-0.5px;width:129.0px;top:345px">401569174126133<br>092740</div>
<div class="td n" style="left:128.5px;width:104.5px;top:345px">20250306080</div>
<div class="td" style="left:233.0px;width:74.5px;top:345px">幸运飞艇新</div>
<div class="td" style="left:307.5px;width:96.0px;top:345px">冠军(小)</div>
<div class="td n" style="left:403.5px;width:142.0px;top:345px">小-A盘@1.98</div>
<div class="td n" style="left:545.5px;width:56.0px;top:345px">50.00</div>
<div class="td n" style="left:601.5px;width:54.5px;top:345px">-50.00</div>
<div class="td n rs" style="left:656.0px;width:92.0px;top:345px">07,10,09,04,0<br>5,06,01,02,03,<br>08</div>
<div class="td n" style="left:748.0px;width:82.5px;top:345px">2025-03-06<br>19:42:10</div>
<div class="td" style="left:830.5px;width:61.0px;top:345px">已开奖</div>
<div class="td" style="left:891.5px;width:62.0px;top:345px">有效</div>
<div class="td n" style="left:-0.5px;width:129.0px;top:421px">401569174125713<br>740910</div>
<div class="td n" style="left:128.5px;width:104.5px;top:421px">20250306066</div>
<div class="td" style="left:233.0px;width:74.5px;top:421px">幸运飞艇新</div>
<div class="td" style="left:307.5px;width:96.0px;top:421px">冠军(大)</div>
<div class="td n" style="left:403.5px;width:142.0px;top:421px">大-A盘@1.98</div>
<div class="td n" style="left:545.5px;width:56.0px;top:421px">50.00</div>
<div class="td n" style="left:601.5px;width:54.5px;top:421px">-50.00</div>
<div class="td n rs" style="left:656.0px;width:92.0px;top:421px">04,01,03,05,1<br>0,06,09,02,08,<br>07</div>
<div class="td n" style="left:748.0px;width:82.5px;top:421px">2025-03-06<br>18:32:17</div>
<div class="td" style="left:830.5px;width:61.0px;top:421px">已开奖</div>
<div class="td" style="left:891.5px;width:62.0px;top:421px">有效</div>
<div class="hl" style="top:116px"></div>
<div class="hl" style="top:192px"></div>
<div class="hl" style="top:268px"></div>
<div class="hl" style="top:344px"></div>
<div class="hl" style="top:420px"></div>
<div class="hl" style="top:496px"></div>
<div class="hl" style="top:534px"></div>
<div class="vl" style="left:128px;top:0;height:496px"></div>
<div class="vl" style="left:232px;top:0;height:496px"></div>
<div class="vl" style="left:307px;top:0;height:496px"></div>
<div class="vl" style="left:403px;top:0;height:496px"></div>
<div class="vl" style="left:545px;top:0;height:572px"></div>
<div class="vl" style="left:601px;top:0;height:572px"></div>
<div class="vl" style="left:655px;top:0;height:572px"></div>
<div class="vl" style="left:747px;top:0;height:496px"></div>
<div class="vl" style="left:830px;top:0;height:496px"></div>
<div class="vl" style="left:891px;top:0;height:496px"></div>
<div class="thl"></div>
<div class="td" style="left:0;width:546px;top:497px;padding-top:11px">当前页统计</div>
<div class="td n" style="left:545px;width:56px;top:497px;padding-top:11px">300.00</div>
<div class="td n" style="left:601px;width:54.5px;top:497px;padding-top:11px">-5.35</div>
<div class="td" style="left:0;width:546px;top:535px;padding-top:11px">总统计</div>
<div class="td n" style="left:545px;width:56px;top:535px;padding-top:11px">300.00</div>
<div class="td n" style="left:601px;width:54.5px;top:535px;padding-top:11px">-5.35</div>
</div>
  
  <div class="box" style="left:10px;top:739px;width:955px;height:54px"></div>
  <div class="pg" style="left:20.8px;top:756px">每页显示20条</div>
  <div class="pg" style="left:642.1px;top:762px">共6条</div>
  <div class="pg lnk" style="left:687.2px;top:762px">首页</div>
  <div class="pg lnk" style="left:723.9px;top:762px">上一页</div>
  <div class="abs" style="left:773.9px;top:760px;width:17px;height:18.5px;background:#ABB0C6"></div>
  <div class="pg lnk" style="left:774.5px;top:762px">[1]</div>
  <div class="pg lnk" style="left:799.8px;top:762px">下一页</div>
  <div class="pg" style="left:844.8px;top:762px">第</div>
  <div class="abs" style="left:865.1px;top:760px;width:29.5px;height:22px;border:1px solid #3C73E0;border-radius:2px;background:#fff"></div>
  <div class="pg" style="left:899.6px;top:762px">页</div>
  <div class="pg lnk" style="left:918px;top:762px">跳转</div>

 </div>
 <div id="bottomgray"><div class="abs" style="left:800px;top:15.8px;width:7px;height:7px;border-radius:50%;background:#E84040"></div><div class="abs" style="left:834px;top:16.7px;width:3px;height:5px;background:#222"></div></div>
</div>
<div class="abs" style="left:1461px;top:0;width:4px;height:838px;background:#E9E9EB"></div><div class="abs" style="left:1461.5px;top:0px;width:3.5px;height:99.0px;background:#E9E9EB"></div><div class="abs" style="left:1461.5px;top:99px;width:3.5px;height:6.0px;background:#C9D9E3"></div><div class="abs" style="left:1461.5px;top:105px;width:3.5px;height:81.0px;background:#AED6EA"></div><div class="abs" style="left:1461.5px;top:186px;width:3.5px;height:10.4px;background:#3A7FE0"></div><div class="abs" style="left:1461.5px;top:196.4px;width:3.5px;height:8.6px;background:#E2ECF5"></div><div class="abs" style="left:1461.5px;top:205px;width:3.5px;height:6.7px;background:#3A7FE0"></div><div class="abs" style="left:1461.5px;top:211.7px;width:3.5px;height:23.3px;background:#E6E6E8"></div><div class="abs" style="left:1461.5px;top:235px;width:3.5px;height:4.7px;background:#E8A830"></div><div class="abs" style="left:1461.5px;top:239.7px;width:3.5px;height:2.6px;background:#E6E6E8"></div><div class="abs" style="left:1461.5px;top:242.3px;width:3.5px;height:10.5px;background:#111"></div><div class="abs" style="left:1461.5px;top:252.8px;width:3.5px;height:5.2px;background:#E6E6E8"></div><div class="abs" style="left:1461.5px;top:258px;width:3.5px;height:19.7px;background:#111"></div><div class="abs" style="left:1461.5px;top:277.7px;width:3.5px;height:5.9px;background:#E6E6E8"></div><div class="abs" style="left:1461.5px;top:283.6px;width:3.5px;height:6.0px;background:#111"></div><div class="abs" style="left:1461.5px;top:289.6px;width:3.5px;height:6.4px;background:#E6E6E8"></div><div class="abs" style="left:1461.5px;top:296px;width:3.5px;height:18.5px;background:#111"></div><div class="abs" style="left:1461.5px;top:314.5px;width:3.5px;height:6.5px;background:#E6E6E8"></div><div class="abs" style="left:1461.5px;top:321px;width:3.5px;height:12.0px;background:#222"></div><div class="abs" style="left:1461.5px;top:333px;width:3.5px;height:6.8px;background:#E6E6E8"></div><div class="abs" style="left:1461.5px;top:339.8px;width:3.5px;height:7.2px;background:#111"></div><div class="abs" style="left:1461.5px;top:347px;width:3.5px;height:17.8px;background:#E6E6E8"></div><div class="abs" style="left:1461.5px;top:364.8px;width:3.5px;height:25.6px;background:#111"></div><div class="abs" style="left:1461.5px;top:390.4px;width:3.5px;height:9.2px;background:#E6E6E8"></div><div class="abs" style="left:1461.5px;top:399.6px;width:3.5px;height:22.3px;background:#151515"></div><div class="abs" style="left:1461.5px;top:421.9px;width:3.5px;height:11.8px;background:#E6E6E8"></div><div class="abs" style="left:1461.5px;top:433.7px;width:3.5px;height:6.8px;background:#E8A830"></div><div class="abs" style="left:1461.5px;top:440.5px;width:3.5px;height:26.5px;background:#DCDCDE"></div><div class="abs" style="left:1461.5px;top:467px;width:3.5px;height:21.0px;background:#2090E0"></div><div class="abs" style="left:1461.5px;top:488px;width:3.5px;height:26.0px;background:#DDE6F0"></div><div class="abs" style="left:1461.5px;top:514px;width:3.5px;height:21.8px;background:#3050D0"></div><div class="abs" style="left:1461.5px;top:535.8px;width:3.5px;height:28.6px;background:#50B0E0"></div><div class="abs" style="left:1461.5px;top:564.4px;width:3.5px;height:51.2px;background:#E3BC45"></div><div class="abs" style="left:1461.5px;top:615.6px;width:3.5px;height:30.4px;background:#DEDEE0"></div><div class="abs" style="left:1461.5px;top:646px;width:3.5px;height:2.0px;background:#333"></div><div class="abs" style="left:1461.5px;top:648px;width:3.5px;height:12.0px;background:#9A9AA0"></div><div class="abs" style="left:1461.5px;top:660px;width:3.5px;height:89.0px;background:#D8D8DA"></div><div class="abs" style="left:1461.5px;top:749px;width:3.5px;height:89.0px;background:#E9E9EB"></div><div class="abs" style="left:1461.5px;top:787px;width:3.5px;height:17.0px;background:#3A3F60"></div><div class="abs" style="left:1461.5px;top:816px;width:3.5px;height:8.5px;background:#3A3F60"></div>
</body></html>
